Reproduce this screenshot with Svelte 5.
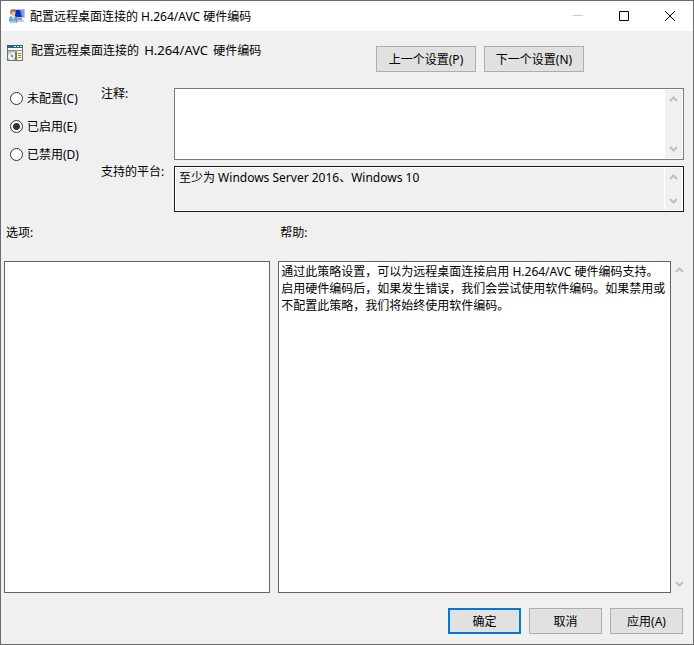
<script lang="ts">
    const policy = '配置远程桌面连接的 H.264/AVC 硬件编码';
    const policyParts = policy.split(' ');

    const states = [
        { value: 'none', label: '未配置(C)' },
        { value: 'enabled', label: '已启用(E)' },
        { value: 'disabled', label: '已禁用(D)' },
    ];

    const platforms = '至少为 Windows Server 2016、Windows 10';
    const helpText =
        '通过此策略设置，可以为远程桌面连接启用 H.264/AVC 硬件编码支持。\n' +
        '启用硬件编码后，如果发生错误，我们会尝试使用软件编码。如果禁用或不配置此策略，我们将始终使用软件编码。';

    let selected = $state('enabled');
    let comment = $state('');
</script>

{#snippet scrollbar()}
    <div class="scrollbar" aria-hidden="true">
        <svg width="9" height="7" viewBox="0 0 9 7"><path d="M1 5 4.5 1.5 8 5" /></svg>
        <svg width="9" height="7" viewBox="0 0 9 7"><path d="M1 2 4.500 5.500 8 2" /></svg>
    </div>
{/snippet}

<div class="window">
    <header class="titlebar">
        <svg class="icon" width="16" height="16" viewBox="0 0 16 16" aria-hidden="true">
            <path d="M4 1h12v9H4z" fill="#b9c7d8" />
            <path d="M6 2h9v7H6z" fill="#0d2fc0" />
            <path d="M11 2h4v7h-2z" fill="#6f9ff0" />
            <path d="M9 10h4v2H9z" fill="#8c9cac" />
            <path d="M8 12h7v2H8z" fill="#c9d0d6" />
            <circle cx="4" cy="4" r="3" fill="#a98355" />
            <path d="M3 4h3v3L5 8H3z" fill="#ecc999" />
            <path d="M0 13c0-4 1-5 4-5s5 1 5 4l-1 3H2z" fill="#6ba3d2" />
            <path d="m3 8 1 4 2-4z" fill="#eef5fa" />
            <path d="M1 13h6v2H2z" fill="#a6c9e3" />
        </svg>
        <span>{policy}</span>
        <div class="controls">
            <button type="button" aria-label="最小化" disabled>
                <svg width="10" height="10" viewBox="0 0 10 10"><path d="M0 4.5h10" /></svg>
            </button>
            <button type="button" aria-label="最大化">
                <svg width="10" height="10" viewBox="0 0 10 10"><path d="M.5.5h9v9h-9z" /></svg>
            </button>
            <button type="button" aria-label="关闭">
                <svg width="10" height="10" viewBox="0 0 10 10"><path d="m0 0 10 10M10 0 0 10" /></svg>
            </button>
        </div>
    </header>

    <div class="heading">
        <svg class="icon" width="16" height="16" viewBox="0 0 16 16" aria-hidden="true">
            <path d="M0 0h16v16H0z" fill="#66757a" />
            <path d="M0 0h16v3H0z" fill="#2b6673" />
            <path d="M7 1h2v1H7zM10 1h2v1h-2zM13 1h2v1h-2z" fill="#dfe9eb" />
            <path d="M1 3h14v2H1z" fill="#f6f6f6" />
            <path d="M1 5h14v1H1z" fill="#8c8c96" />
            <path d="M1 6h9v9H1z" fill="#aeb8b8" />
            <circle cx="5" cy="11" r="4" fill="#f0f3ee" />
            <path d="m5 11-3-3 2-1zM5 11l3 2-1 2z" fill="#b4cfae" />
            <circle cx="5" cy="11" r="1" fill="#617579" />
            <path d="M8 7h2v8H8z" fill="#77766e" />
            <path d="M10 6h5v9h-5z" fill="#fff3cb" />
            <path d="M11 8.5h3M11 10.5h3M11 12.5h3" stroke="#8f7c4a" />
        </svg>
        <div class="policy">
            {policyParts[0]} <span class="latin">{policyParts[1]}</span> {policyParts[2]}
        </div>
        <div class="nav">
            <button type="button" class="btn wide">上一个设置(P)</button>
            <button type="button" class="btn wide">下一个设置(N)</button>
        </div>
    </div>

    <div class="settings">
        <div class="states" role="radiogroup" aria-label="状态">
            {#each states as state}
                <label>
                    <input type="radio" name="state" value={state.value} bind:group={selected} />
                    {state.label}
                </label>
            {/each}
        </div>
        <div class="fields">
            <label for="comment">注释:</label>
            <div class="box comment">
                <textarea id="comment" bind:value={comment}></textarea>
                {@render scrollbar()}
            </div>
            <label for="platforms">支持的平台:</label>
            <div class="box platforms">
                <textarea id="platforms" readonly value={platforms}></textarea>
                {@render scrollbar()}
            </div>
        </div>
    </div>

    <div class="panels">
        <section class="panel">
            <h2>选项:</h2>
            <div class="options"></div>
        </section>
        <section class="panel">
            <label for="help">帮助:</label>
            <div class="help">
                <textarea id="help" readonly value={helpText}></textarea>
                {@render scrollbar()}
            </div>
        </section>
    </div>

    <footer>
        <button type="button" class="btn primary">确定</button>
        <button type="button" class="btn">取消</button>
        <button type="button" class="btn">应用(A)</button>
    </footer>
</div>

<style>
    :global(body) {
        margin: 0;
    }

    .window {
        display: flex;
        flex-direction: column;
        box-sizing: border-box;
        min-height: 100vh;
        border: 1px solid #6b6b6b;
        background: #f0f0f0;
        color: #000;
    }

    .window,
    button,
    textarea {
        font-family: "Noto Sans", "Noto Sans CJK SC", sans-serif;
        font-size: 12px;
        line-height: 17px;
    }

    .icon {
        flex: none;
    }

    .titlebar {
        display: flex;
        align-items: center;
        gap: 5px;
        height: 30px;
        padding-left: 8px;
        background: #fff;
    }

    .controls {
        display: flex;
        align-self: stretch;
        margin-left: auto;
    }

    .controls button {
        display: grid;
        place-items: center;
        width: 46px;
        padding: 0;
        border: 0;
        background: none;
    }

    .controls path {
        fill: none;
        stroke: #000;
    }

    .controls button:disabled path {
        stroke: #ccc;
    }

    .heading {
        display: flex;
        align-items: flex-start;
        gap: 8px;
        padding: 14px 109px 0 6px;
    }

    .policy {
        margin-top: -3px;
        word-spacing: normal;
    }

    .latin {
        padding: 0 2px;
        font-size: 13px;
    }

    .nav {
        display: flex;
        gap: 8px;
        margin-top: 1px;
        margin-left: auto;
    }

    .btn {
        width: 73px;
        height: 26px;
        padding: 0;
        border: 1px solid #adadad;
        background: #e1e1e1;
        color: #000;
    }

    .btn.wide {
        width: 100px;
    }

    .btn.primary {
        border: 2px solid #0078d7;
    }

    .settings {
        display: flex;
        padding: 16px 9px 0;
    }

    .states {
        display: flex;
        flex-direction: column;
        gap: 11px;
        width: 91px;
        padding-top: 2px;
    }

    .states label {
        display: flex;
        align-items: center;
        gap: 4px;
    }

    .states input {
        appearance: none;
        box-sizing: border-box;
        width: 13px;
        height: 13px;
        margin: 0;
        border: 1px solid #333;
        border-radius: 50%;
        background: #fff;
    }

    .states input:checked {
        background: radial-gradient(circle, #333 3px, #fff 4px);
    }

    .fields {
        display: grid;
        flex: 1;
        grid-template-columns: 73px 1fr;
        row-gap: 6px;
        align-items: start;
    }

    .fields label {
        margin-top: -3px;
    }

    .box {
        display: flex;
        box-sizing: border-box;
        padding: 1px;
        border: 1px solid #7a7a7a;
        background: #fff;
    }

    .comment {
        height: 72px;
    }

    .platforms {
        height: 46px;
        border-color: #1a1a1a;
    }

    .platforms textarea {
        margin-right: 1px;
        background: #f0f0f0;
    }

    textarea {
        flex: 1;
        min-width: 0;
        margin: 0;
        padding: 1px 3px;
        border: 0;
        outline: 0;
        background: #fff;
        color: #000;
        resize: none;
        overflow: hidden;
    }

    .scrollbar {
        display: flex;
        flex-direction: column;
        justify-content: space-between;
        align-items: center;
        box-sizing: border-box;
        width: 17px;
        padding: 6px 0;
        background: #f0f0f0;
    }

    .scrollbar path {
        fill: none;
        stroke: #bfbfbf;
        stroke-width: 2;
    }

    .panels {
        display: grid;
        flex: 1;
        grid-template-columns: 13fr 20fr;
        gap: 8px;
        padding: 12px 5px 0 3px;
    }

    .panel {
        display: flex;
        flex-direction: column;
        gap: 20px;
    }

    .panel h2,
    .panel > label {
        margin: 0;
        padding-left: 2px;
        font-size: 12px;
        font-weight: normal;
    }

    .options {
        flex: 1;
        border: 1px solid #646464;
        background: #fff;
    }

    .help {
        display: flex;
        flex: 1;
    }

    .help textarea {
        padding: 1px 2px;
        border: 1px solid #646464;
    }

    footer {
        display: flex;
        justify-content: flex-end;
        gap: 8px;
        padding: 15px 10px 10px;
    }
</style>
